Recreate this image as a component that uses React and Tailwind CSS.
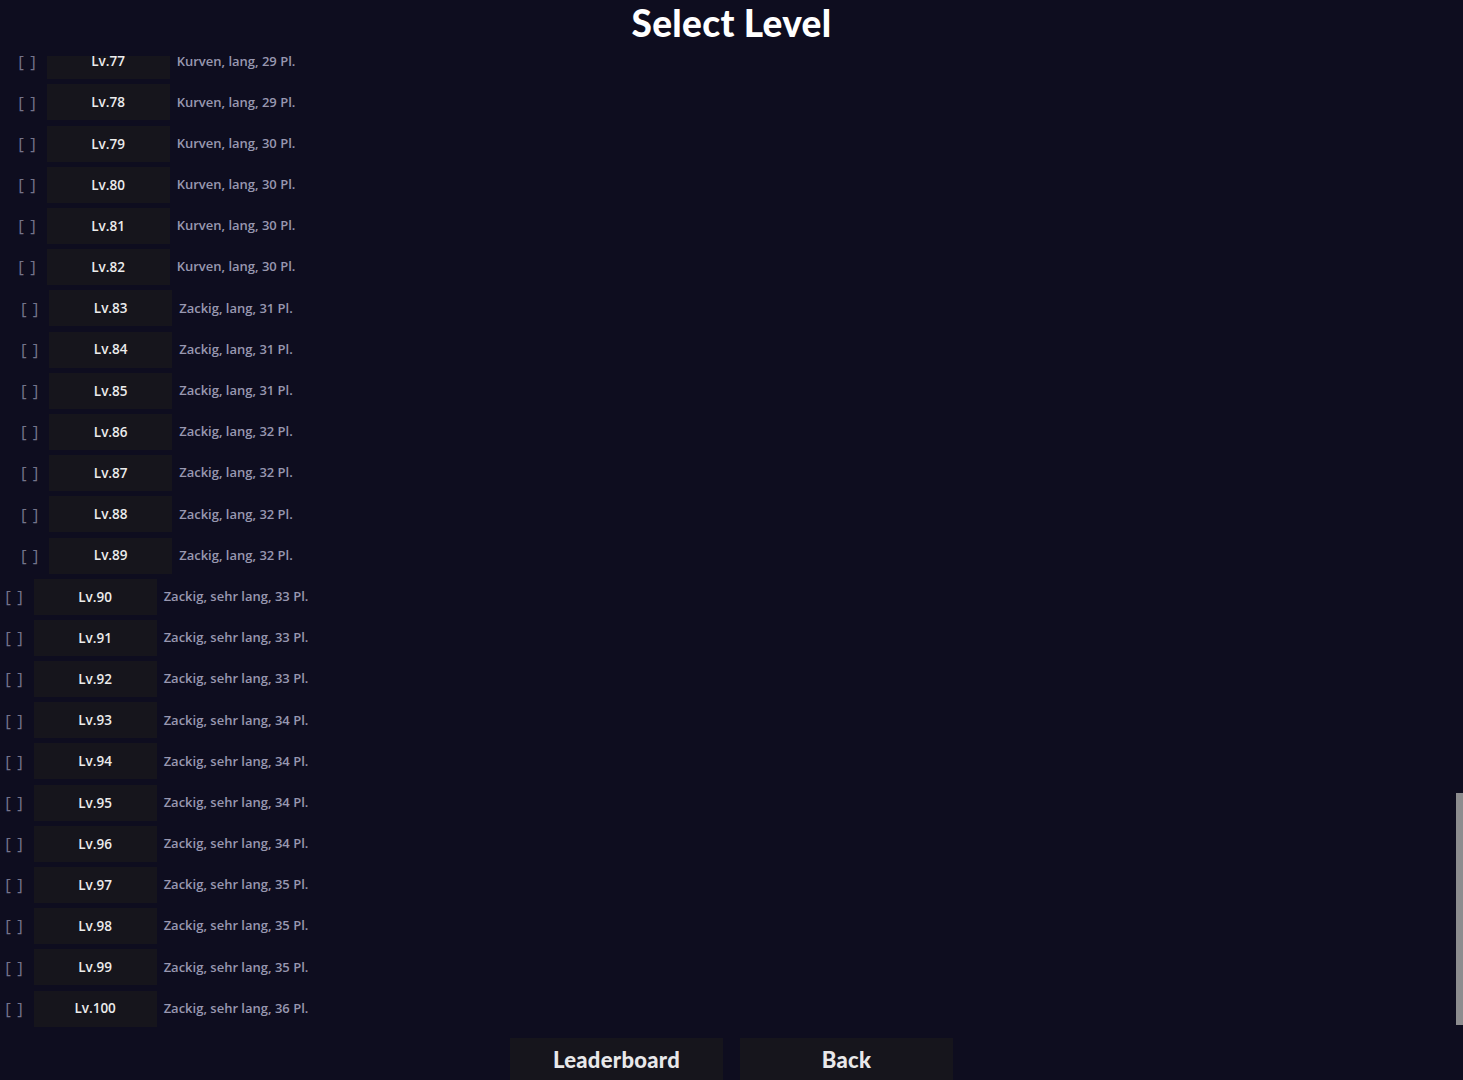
import React, { useLayoutEffect, useRef } from "react";

function desc(n) {
  if (n <= 82) {
    const p = n <= 78 ? 29 : 30;
    return `Kurven, lang, ${p} Pl.`;
  }
  if (n <= 89) {
    const p = n <= 85 ? 31 : 32;
    return `Zackig, lang, ${p} Pl.`;
  }
  let p = 33;
  if (n >= 93) p = 34;
  if (n >= 97) p = 35;
  if (n >= 100) p = 36;
  return `Zackig, sehr lang, ${p} Pl.`;
}

const levels = Array.from({ length: 100 }, (_, i) => i + 1);

export default function App() {
  const ref = useRef(null);
  useLayoutEffect(() => {
    if (ref.current) ref.current.scrollTop = ref.current.scrollHeight;
  }, []);
  return (
    <div
      className="h-[1080px] w-full overflow-hidden bg-[#0e0d1f] flex flex-col"
      style={{ fontFamily: "'Open Sans', 'Noto Sans', sans-serif" }}
    >
      <div className="h-[56px] shrink-0 flex items-center justify-center">
        <h1
          className="text-[37px] leading-none font-black text-white tracking-[0.3px] -mt-[12px]"
          style={{ fontFamily: "Lato, 'Open Sans', sans-serif" }}
        >
          Select Level
        </h1>
      </div>
      <div className="relative flex-1 min-h-0">
        <div
          ref={ref}
          className="absolute inset-0 overflow-y-auto [scrollbar-width:none]"
        >
          <div className="w-[313px] flex flex-col items-center gap-[5.2px] pb-[1px]">
            {levels.map((n) => (
              <div key={n} className="flex items-center">
                <span className="text-[17px] text-[#74748a] w-[20px] text-center mr-[9px] tracking-[1px]">
                  [ ]
                </span>
                <div className="w-[123px] h-[36px] bg-[#16151c] flex items-center justify-center text-[13.5px] font-semibold text-[#ececec]">
                  Lv.{n}
                </div>
                <span className="ml-[7px] text-[13px] font-semibold text-[#9897b0]">
                  {desc(n)}
                </span>
              </div>
            ))}
          </div>
        </div>
        <div className="absolute right-0 bottom-[3px] w-[7px] h-[232px] bg-[#8c8c8e]" />
      </div>
      <div className="h-[52px] shrink-0 flex justify-center gap-[17px] pt-[10px]">
        <button
          className="w-[213px] h-[50px] bg-[#16151c] text-[22px] font-black text-[#e8e8ea] pb-[7px] tracking-[0.3px]"
          style={{ fontFamily: "Lato, 'Open Sans', sans-serif" }}
        >
          Leaderboard
        </button>
        <button
          className="w-[213px] h-[50px] bg-[#16151c] text-[22px] font-black text-[#e8e8ea] pb-[7px] tracking-[0.3px]"
          style={{ fontFamily: "Lato, 'Open Sans', sans-serif" }}
        >
          Back
        </button>
      </div>
    </div>
  );
}
